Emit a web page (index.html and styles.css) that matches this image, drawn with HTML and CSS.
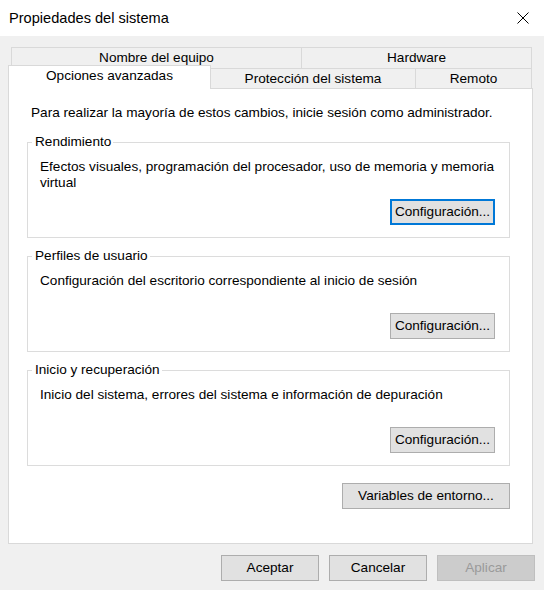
FILE: index.html
```html
<!DOCTYPE html>
<html>
<head>
<meta charset="utf-8">
<title>Propiedades del sistema</title>
<link rel="stylesheet" href="styles.css">
</head>
<body>
<div class="titlebar">
  <span class="title">Propiedades del sistema</span>
  <svg class="close" width="12" height="12" viewBox="0 0 12 12"><path d="M0.5 0.5L11.5 11.5M11.5 0.5L0.5 11.5" stroke="#000" stroke-width="1" fill="none"/></svg>
</div>
<div class="content">
  <div class="tabrow row1">
    <div class="tab t-nombre">Nombre del equipo</div>
    <div class="tab t-hardware">Hardware</div>
  </div>
  <div class="tabrow row2">
    <div class="tab selected">Opciones avanzadas</div>
    <div class="tab t-proteccion">Protección del sistema</div>
    <div class="tab t-remoto">Remoto</div>
  </div>
  <div class="panel">
    <p class="note">Para realizar la mayoría de estos cambios, inicie sesión como administrador.</p>

    <fieldset class="group">
      <legend>Rendimiento</legend>
      <div class="desc">Efectos visuales, programación del procesador, uso de memoria y memoria virtual</div>
      <div class="group-btns"><button class="btn config focus">Configuración...</button></div>
    </fieldset>

    <fieldset class="group">
      <legend>Perfiles de usuario</legend>
      <div class="desc">Configuración del escritorio correspondiente al inicio de sesión</div>
      <div class="group-btns"><button class="btn config">Configuración...</button></div>
    </fieldset>

    <fieldset class="group">
      <legend>Inicio y recuperación</legend>
      <div class="desc">Inicio del sistema, errores del sistema e información de depuración</div>
      <div class="group-btns"><button class="btn config">Configuración...</button></div>
    </fieldset>

    <div class="panel-btns"><button class="btn wide">Variables de entorno...</button></div>
  </div>
  <div class="dialog-btns">
    <button class="btn dlg">Aceptar</button>
    <button class="btn dlg">Cancelar</button>
    <button class="btn dlg" disabled>Aplicar</button>
  </div>
</div>
</body>
</html>
```

FILE: styles.css
```css
body {
    margin: 0;
    height: 590px;
    display: flex;
    flex-direction: column;
    background-color: #f0f0f0;
    font-family: "Liberation Sans", Arial, sans-serif;
    font-size: 13.6px;
    line-height: 16px;
    color: #000;
}

/* window caption */
.titlebar {
    height: 36px;
    flex: none;
    display: flex;
    align-items: center;
    justify-content: space-between;
    padding: 0 15px 0 9px;
    background-color: #fff;
}
.title {
    font-size: 14.6px;
}
.close {
    display: block;
}

.content {
    flex: 1;
    display: flex;
    flex-direction: column;
    padding: 11px 11px 9px 8px;
}

/* tab strip, two rows */
.tabrow {
    display: flex;
    flex: none;
}
.row1 {
    height: 21px;
    margin: 0 1px 0 3px;
}
.row2 {
    height: 20px;
    margin: 0 1px 0 2px;
}
.tab {
    box-sizing: border-box;
    display: flex;
    align-items: center;
    justify-content: center;
    border: 1px solid #d9d9d9;
    border-bottom: none;
    background-color: #f0f0f0;
    white-space: nowrap;
}
.tab + .tab {
    margin-left: -1px;
}
.t-nombre {
    width: 291px;
}
.t-hardware,
.t-remoto {
    flex: 1;
}
.t-proteccion {
    width: 206px;
}
.tab.selected {
    position: relative;
    z-index: 1;
    width: 203px;
    height: 24px;
    margin: -3px 0 -1px -2px;
    padding-top: 2px;
    align-items: flex-start;
    background-color: #fff;
}

/* page body of the selected tab */
.panel {
    flex: 1;
    display: flex;
    flex-direction: column;
    padding: 16px 22px 0 18px;
    border: 1px solid #d9d9d9;
    background-color: #fff;
}
.note {
    margin: 0 0 13px 4px;
}

.group {
    margin: 0 0 10px 0;
    padding: 0 14px 12px 4px;
    border: 1px solid #dcdcdc;
    min-width: 0;
}
.group legend {
    padding: 0 2px 0 3px;
}
.desc {
    height: 32px;
    margin: 9px -12px 0 8px;
}
.group-btns,
.panel-btns,
.dialog-btns {
    display: flex;
    justify-content: flex-end;
}
.group-btns {
    margin-top: 8px;
}
.panel-btns {
    margin-top: 7px;
}
.dialog-btns {
    flex: none;
    gap: 10px;
    margin: 11px -2px 0 0;
}

/* push buttons */
.btn {
    box-sizing: border-box;
    height: 26px;
    padding: 0;
    border: 1px solid #adadad;
    background-color: #e1e1e1;
    color: #000;
    font-family: inherit;
    font-size: 13.6px;
    line-height: 16px;
}
.btn.focus {
    border: 2px solid #0078d7;
}
.btn:disabled {
    border-color: #bfbfbf;
    background-color: #cccccc;
    color: #9a9a9a;
}
.config {
    width: 105px;
}
.wide {
    width: 168px;
}
.dlg {
    width: 98px;
}
```
